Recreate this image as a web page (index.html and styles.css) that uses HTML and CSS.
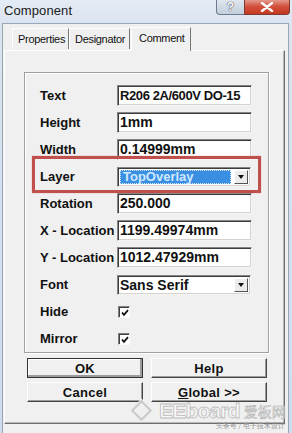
FILE: index.html
```html
<!DOCTYPE html>
<html>
<head>
<meta charset="utf-8">
<link rel="stylesheet" href="styles.css">
</head>
<body>
<div class="window">
  <div class="titlebar">
    <span class="title">Component</span>
    <div class="caption-btns">
      <div class="cbtn help-cbtn">?</div>
      <div class="cbtn close-cbtn">
        <svg width="14" height="10" viewBox="0 0 14 10"><path d="M2 1 L12 9 M12 1 L2 9" stroke="#fff" stroke-width="2.4" stroke-linecap="round"/></svg>
      </div>
    </div>
  </div>
  <div class="client">
    <div class="tabs">
      <div class="tab">Properties</div>
      <div class="tab">Designator</div>
      <div class="tab active">Comment</div>
    </div>
    <div class="panel">
      <div class="group">
        <div class="row"><span class="label">Text</span><div class="field clip"><span class="scrolled">R206 2A/600V DO-15</span></div></div>
        <div class="row"><span class="label">Height</span><div class="field">1mm</div></div>
        <div class="row"><span class="label">Width</span><div class="field">0.14999mm</div></div>
        <div class="row"><span class="label">Layer</span>
          <div class="combo"><span class="sel"><span class="seltext">TopOverlay</span></span><span class="arrow"><span class="tri"></span></span></div>
        </div>
        <div class="row"><span class="label">Rotation</span><div class="field">250.000</div></div>
        <div class="row"><span class="label">X - Location</span><div class="field">1199.49974mm</div></div>
        <div class="row"><span class="label">Y - Location</span><div class="field">1012.47929mm</div></div>
        <div class="row"><span class="label">Font</span>
          <div class="combo"><span class="plain">Sans Serif</span><span class="arrow"><span class="tri"></span></span></div>
        </div>
        <div class="row"><span class="label">Hide</span><span class="check"><svg width="8" height="8" viewBox="0 0 8 8"><path d="M1 3.5 L3 5.8 L7 1.2" fill="none" stroke="#111" stroke-width="1.8"/></svg></span></div>
        <div class="row"><span class="label">Mirror</span><span class="check"><svg width="8" height="8" viewBox="0 0 8 8"><path d="M1 3.5 L3 5.8 L7 1.2" fill="none" stroke="#111" stroke-width="1.8"/></svg></span></div>
        <div class="highlight"></div>
      </div>
      <div class="buttons">
        <div class="btn default">OK</div>
        <div class="btn">Help</div>
        <div class="btn">Cancel</div>
        <div class="btn"><u>G</u>lobal &gt;&gt;</div>
      </div>
      <div class="watermark">
        <div class="wm-main"><span class="diamond"></span><span class="wm-en">EEboard</span><span class="wm-cn">爱板网</span></div>
        <div class="wm-sub">头条号 / 电子技术设计</div>
      </div>
    </div>
  </div>
</div>
</body>
</html>
```

FILE: styles.css
```css
* { box-sizing: border-box; }
html, body { margin: 0; padding: 0; }
body {
  width: 292px;
  height: 433px;
  overflow: hidden;
  background: #d3dfee;
  font-family: "Liberation Sans", Arial, sans-serif;
}
.window {
  width: 292px;
  height: 433px;
  display: flex;
  flex-direction: column;
  background: linear-gradient(180deg, #e4ebf4 0px, #dae4f0 24px, #cfdcec 100%);
}
.titlebar {
  height: 23px;
  display: flex;
  align-items: flex-start;
  padding-left: 4px;
}
.title {
  font-size: 13px;
  color: #1a1a1a;
  margin-top: 3px;
  letter-spacing: 0.1px;
}
.caption-btns {
  margin-left: auto;
  margin-right: 2px;
  display: flex;
  height: 15px;
}
.cbtn {
  height: 15px;
  display: flex;
  align-items: center;
  justify-content: center;
  border: 1px solid #6b7a8e;
  border-top: none;
}
.help-cbtn {
  width: 28px;
  background: linear-gradient(180deg, #dfe6ee, #c3cfdc);
  border-radius: 0 0 0 4px;
  color: #fff;
  font-size: 12px;
  font-weight: bold;
  text-shadow: 0 0 1px #333, 0 0 1px #333;
  border-right: none;
}
.close-cbtn {
  width: 46px;
  background: linear-gradient(180deg, #e39a8c 0%, #d3513e 45%, #c4381f 100%);
  border-radius: 0 0 4px 0;
  border-color: #7d3a30;
}
.client {
  margin: 0 3px 0 2px;
  flex: 1;
  background: #f0f0f0;
  border: 1px solid #97a5b6;
  border-bottom: none;
  display: flex;
  flex-direction: column;
  padding: 0 3px 9px 1px;
}
.tabs {
  display: flex;
  align-items: flex-end;
  height: 26px;
  padding-left: 8px;
  position: relative;
  z-index: 1;
}
.tab {
  height: 21px;
  font-size: 11px;
  letter-spacing: -0.3px;
  color: #111;
  padding: 4px 5px 0 5px;
  border-top: 1px solid #fff;
  border-left: 1px solid #fff;
  border-right: 1px solid #777;
  margin-bottom: 1px;
}
.tab:nth-child(1) { width: 57px; }
.tab:nth-child(2) { width: 61px; }
.tab.active {
  height: 24px;
  width: 60px;
  padding-top: 4px;
  padding-left: 7px;
  margin-bottom: -1px;
  background: #f0f0f0;
  margin-left: 1px;
}
.panel {
  flex: 1;
  border-top: 1px solid #fff;
  border-left: 1px solid #fff;
  border-right: 1px solid #6e6e6e;
  border-bottom: 1px solid #6e6e6e;
  box-shadow: inset -1px -1px 0 #b8b8b8;
  padding: 21px 15px 0 19px;
  display: flex;
  flex-direction: column;
  position: relative;
}
.group {
  border: 1px solid #a0a0a0;
  box-shadow: 1px 1px 0 #fff, inset 1px 1px 0 #fff;
  padding: 12px 14px 3px 15px;
  display: flex;
  flex-direction: column;
  gap: 6px;
  position: relative;
}
.row {
  display: flex;
  align-items: center;
  height: 21px;
}
.label {
  width: 77px;
  font-size: 13px;
  font-weight: bold;
  color: #111;
  white-space: nowrap;
}
.field {
  width: 135px;
  height: 21px;
  background: #fff;
  border-top: 1px solid #858585;
  border-left: 1px solid #858585;
  border-right: 1px solid #f4f4f4;
  border-bottom: 1px solid #f4f4f4;
  box-shadow: inset 1px 1px 0 #3c3c3c, inset -1px -1px 0 #d6d3ce;
  font-size: 14px;
  font-weight: bold;
  color: #111;
  line-height: 19px;
  padding-left: 2px;
  white-space: nowrap;
  overflow: hidden;
}
.clip .scrolled {
  display: inline-block;
  font-size: 13px;
  letter-spacing: -0.4px;
}
.combo {
  width: 134px;
  height: 20px;
  background: #fff;
  border-top: 1px solid #858585;
  border-left: 1px solid #858585;
  border-right: 1px solid #f4f4f4;
  border-bottom: 1px solid #f4f4f4;
  box-shadow: inset 1px 1px 0 #3c3c3c, inset -1px -1px 0 #d6d3ce;
  display: flex;
  align-items: stretch;
  padding: 2px;
}
.sel {
  flex: 1;
  background: #3b8fe3;
  border: 1px dotted #cfe6ff;
  margin-right: 3px;
  display: flex;
  align-items: center;
}
.seltext {
  font-size: 13px;
  font-weight: bold;
  color: #cfeaff;
  padding-left: 2px;
}
.plain {
  flex: 1;
  font-size: 14px;
  font-weight: bold;
  color: #111;
  line-height: 15px;
  margin-right: 3px;
}
.arrow {
  width: 14px;
  background: #ececec;
  border-top: 1px solid #fff;
  border-left: 1px solid #fff;
  border-right: 1px solid #555;
  border-bottom: 1px solid #555;
  display: flex;
  align-items: center;
  justify-content: center;
}
.tri {
  width: 0;
  height: 0;
  border-left: 3.5px solid transparent;
  border-right: 3.5px solid transparent;
  border-top: 4px solid #111;
}
.check {
  width: 12px;
  height: 12px;
  margin-left: 1px;
  margin-top: 1px;
  background: #fff;
  border-top: 1px solid #808080;
  border-left: 1px solid #808080;
  border-right: 1px solid #fafafa;
  border-bottom: 1px solid #fafafa;
  box-shadow: inset 1px 1px 0 #404040;
  display: flex;
  align-items: center;
  justify-content: center;
  padding: 1px 0 0 1px;
}
.highlight {
  position: absolute;
  left: 7px;
  top: 83px;
  width: 229px;
  height: 37px;
  border: 3px solid #c0504d;
  box-shadow: 0 0 1px #d88;
  pointer-events: none;
}
.buttons {
  display: grid;
  grid-template-columns: 116px 116px;
  grid-auto-rows: 20px;
  column-gap: 8px;
  row-gap: 4px;
  margin-top: 5px;
  margin-left: 3px;
}
.btn {
  border-top: 1px solid #fff;
  border-left: 1px solid #fff;
  border-right: 1px solid #444;
  border-bottom: 1px solid #444;
  box-shadow: inset -1px -1px 0 #9c9c9c;
  background: #f0f0f0;
  font-size: 13px;
  font-weight: bold;
  color: #111;
  display: flex;
  align-items: center;
  justify-content: center;
  letter-spacing: 0.3px;
}
.btn.default {
  outline: 1px solid #333;
  outline-offset: -1px;
  box-shadow: inset -2px -2px 0 #9c9c9c, inset 1px 1px 0 #fff;
}
.watermark {
  position: absolute;
  left: 127px;
  top: 350px;
  display: flex;
  flex-direction: column;
  align-items: flex-end;
  white-space: nowrap;
  pointer-events: none;
}
.wm-main {
  display: flex;
  align-items: center;
  height: 19px;
  white-space: nowrap;
}
.diamond {
  flex: none;
  width: 15px;
  height: 15px;
  border: 2px solid #c9c9c9;
  box-shadow: 0 0 0 1px #ececec;
  transform: rotate(45deg);
  margin-left: 2px;
  margin-right: 10px;
}
.wm-en {
  font-family: "Liberation Sans", Arial, sans-serif;
  font-size: 21px;
  font-weight: bold;
  color: rgba(255,255,255,0.55);
  -webkit-text-stroke: 0.8px #bdbdbd;
  letter-spacing: -0.8px;
  line-height: 19px;
  margin-right: 4px;
}
.wm-cn {
  font-family: "Noto Sans CJK SC", sans-serif;
  font-size: 14px;
  color: rgba(255,255,255,0.6);
  -webkit-text-stroke: 0.6px #b5b5b5;
  line-height: 16px;
  white-space: nowrap;
}
.wm-sub {
  font-family: "Noto Sans CJK SC", sans-serif;
  font-size: 7px;
  color: #9a9a9a;
  line-height: 8px;
  margin-top: 1px;
  margin-right: 1px;
  white-space: nowrap;
}
```
